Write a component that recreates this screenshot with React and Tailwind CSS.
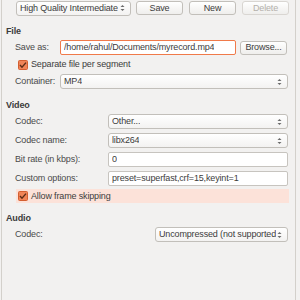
import React from 'react';

const Spinner = () => (
    <svg width="5" height="8" viewBox="0 0 5 8" className="shrink-0">
        <path d="M0.5 3 L2.5 1 L4.5 3 Z" fill="#6a6a6a" />
        <path d="M0.5 5 L2.5 7 L4.5 5 Z" fill="#6a6a6a" />
    </svg>
);

const Combo = ({ text, className = '' }) => (
    <div className={`h-[15px] flex items-center justify-between pl-[3px] pr-[5px] rounded-[3px] border border-[#c2bfba] bg-gradient-to-b from-white to-[#f3f2f1] text-[#3c3c3c] ${className}`}>
        <span className="whitespace-nowrap overflow-hidden leading-none">{text}</span>
        <Spinner />
    </div>
);

const Field = ({ text, className = '' }) => (
    <div className={`h-[15px] flex items-center pl-[3px] rounded-[2px] border bg-white text-[#3c3c3c] ${className}`}>
        <span className="whitespace-nowrap overflow-hidden leading-none">{text}</span>
    </div>
);

const Button = ({ children, disabled }) => (
    <div className={`w-[47px] h-[14px] flex items-center justify-center rounded-[3px] border bg-gradient-to-b from-white to-[#efeeec] leading-none ${disabled ? 'border-[#d9d6d2] text-[#b3b0ab]' : 'border-[#c2bfba] text-[#3c3c3c]'}`}>
        {children}
    </div>
);

const Check = () => (
    <svg width="10" height="10" viewBox="0 0 10 10" className="shrink-0">
        <rect x="0.5" y="0.5" width="9" height="9" rx="1" fill="#ef8457" stroke="#d45f30" />
        <path d="M2 5 L4 7.2 L8 2.6" fill="none" stroke="#5b2c17" strokeWidth="1.4" />
    </svg>
);

const Row = ({ label, children, labelW, className = '' }) => (
    <div className={`flex items-center h-[15px] ${className}`}>
        <span className={`pl-[13px] text-[#4a4a4a] leading-none whitespace-nowrap shrink-0 ${labelW}`}>{label}</span>
        {children}
    </div>
);

const Heading = ({ children, className = '' }) => (
    <div className={`h-[14px] flex items-center pl-[4px] font-bold text-[#3c3c3c] leading-none ${className}`}>{children}</div>
);

export default function App() {
    return (
        <div className="w-[300px] h-[300px] bg-[#f2f1f0] overflow-hidden text-[9px] tracking-[-0.15px]" style={{ fontFamily: '"Liberation Sans", Arial, sans-serif' }}>
            <div className="ml-[1px] w-[295px] h-full border-l border-r border-[#d3d0cb]">
                <div className="flex items-center pt-[1px] pl-[14px] h-[15px]">
                    <Combo text="High Quality Intermediate" className="w-[115px]" />
                    <div className="flex gap-[6px] ml-[5px]">
                        <Button>Save</Button>
                        <Button>New</Button>
                        <Button disabled>Delete</Button>
                    </div>
                </div>

                <Heading className="mt-[9px]">File</Heading>
                <Row label="Save as:" labelW="w-[58px]" className="mt-[2px]">
                    <Field text="/home/rahul/Documents/myrecord.mp4" className="w-[176px] border-[#f07a4a]" />
                    <div className="ml-[4px]">
                        <Button>Browse...</Button>
                    </div>
                </Row>
                <div className="flex items-center h-[15px] mt-[2px] pl-[16px] gap-[3px] text-[#3c3c3c]">
                    <Check />
                    <span className="leading-none">Separate file per segment</span>
                </div>
                <Row label="Container:" labelW="w-[58px]" className="mt-[2px]">
                    <Combo text="MP4" className="w-[228px]" />
                </Row>

                <Heading className="mt-[9px]">Video</Heading>
                <Row label="Codec:" labelW="w-[106px]" className="mt-[2px]">
                    <Combo text="Other..." className="w-[180px]" />
                </Row>
                <Row label="Codec name:" labelW="w-[106px]" className="mt-[4px]">
                    <Combo text="libx264" className="w-[180px]" />
                </Row>
                <Row label="Bit rate (in kbps):" labelW="w-[106px]" className="mt-[4px]">
                    <Field text="0" className="w-[180px] border-[#c7c4bf]" />
                </Row>
                <Row label="Custom options:" labelW="w-[106px]" className="mt-[4px]">
                    <Field text="preset=superfast,crf=15,keyint=1" className="w-[180px] border-[#c7c4bf]" />
                </Row>
                <div className="ml-[14px] w-[273px] h-[14px] mt-[3px] bg-[#fce2d9] flex items-center pl-[2px] gap-[3px] text-[#3c3c3c]">
                    <Check />
                    <span className="leading-none">Allow frame skipping</span>
                </div>

                <Heading className="mt-[8px]">Audio</Heading>
                <Row label="Codec:" labelW="w-[153px]" className="mt-[2px]">
                    <Combo text="Uncompressed (not supported" className="w-[133px]" />
                </Row>
            </div>
        </div>
    );
}
